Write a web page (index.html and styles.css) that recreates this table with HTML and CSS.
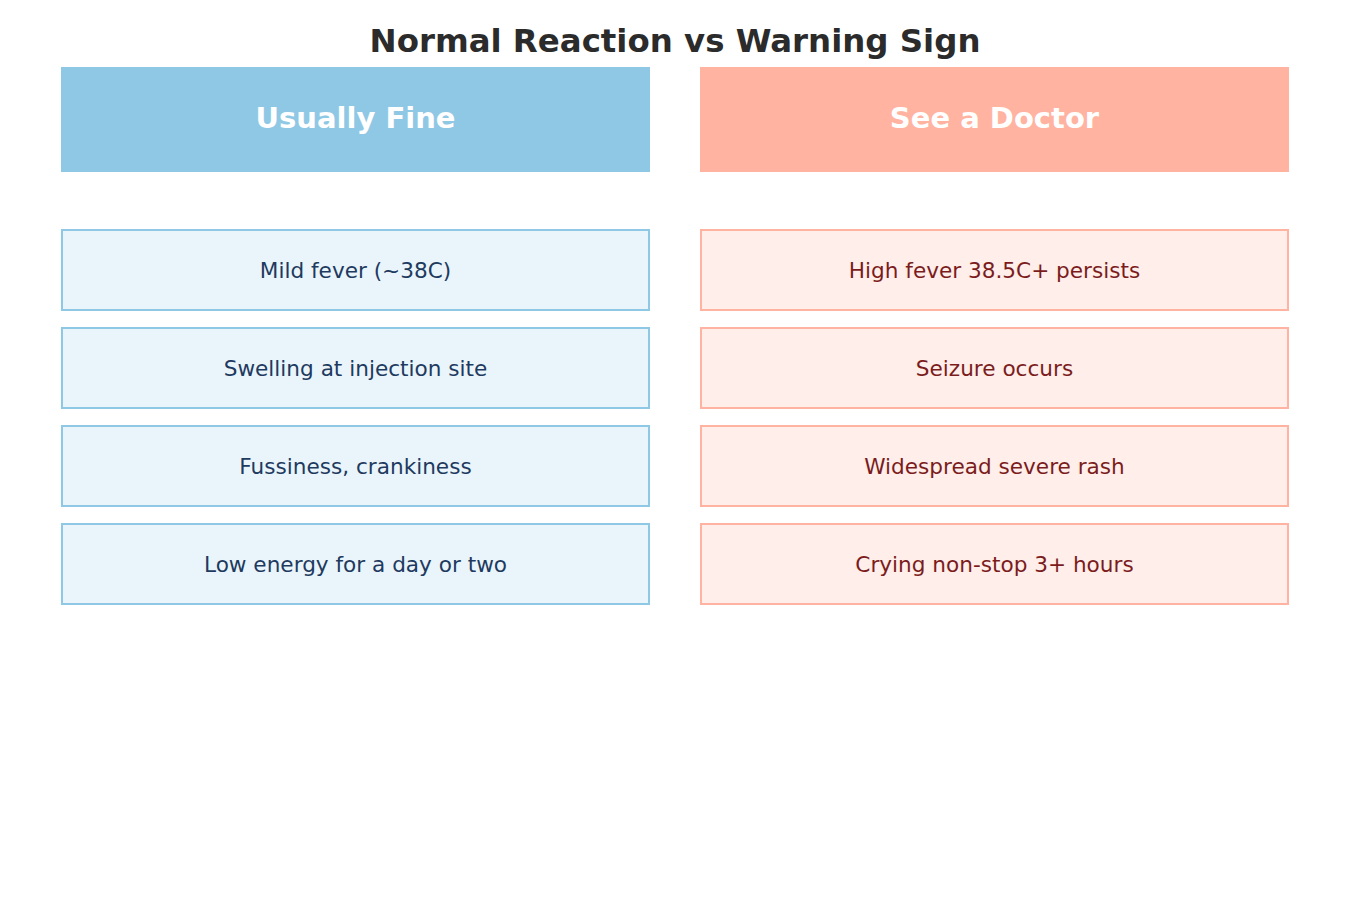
FILE: index.html
```html
<!DOCTYPE html>
<html>
<head>
<meta charset="utf-8">
<link rel="stylesheet" href="styles.css">
</head>
<body>
<div class="page">
  <h1 class="title">Normal Reaction vs Warning Sign</h1>
  <div class="columns">
    <div class="col col-fine">
      <div class="head">Usually Fine</div>
      <div class="items">
        <div class="item">Mild fever (~38C)</div>
        <div class="item">Swelling at injection site</div>
        <div class="item">Fussiness, crankiness</div>
        <div class="item">Low energy for a day or two</div>
      </div>
    </div>
    <div class="col col-doctor">
      <div class="head">See a Doctor</div>
      <div class="items">
        <div class="item">High fever 38.5C+ persists</div>
        <div class="item">Seizure occurs</div>
        <div class="item">Widespread severe rash</div>
        <div class="item">Crying non-stop 3+ hours</div>
      </div>
    </div>
  </div>
</div>
</body>
</html>
```
FILE: styles.css
```css
html, body {
  margin: 0;
  padding: 0;
  background: #ffffff;
}
body {
  font-family: "DejaVu Sans", sans-serif;
}
.page {
  width: 1350px;
  height: 900px;
  box-sizing: border-box;
  padding-top: 21px;
}
.title {
  margin: 0;
  text-align: center;
  font-size: 32.4px;
  font-weight: bold;
  color: #2b2b2b;
  line-height: 40px;
  height: 46px;
}
.columns {
  display: flex;
  gap: 50px;
  padding-left: 61px;
}
.col {
  width: 589px;
  display: flex;
  flex-direction: column;
}
.head {
  height: 105px;
  box-sizing: border-box;
  padding-bottom: 4px;
  display: flex;
  align-items: center;
  justify-content: center;
  color: #ffffff;
  font-weight: bold;
  font-size: 29px;
}
.items {
  margin-top: 57px;
  display: flex;
  flex-direction: column;
  gap: 16px;
}
.item {
  height: 82px;
  box-sizing: border-box;
  display: flex;
  align-items: center;
  justify-content: center;
  font-size: 21.6px;
  border: 2px solid;
}
.col-fine .head { background: #8fc8e4; }
.col-fine .item {
  background: #eaf5fb;
  border-color: #8fc8e4;
  color: #1e3a5f;
}
.col-doctor .head { background: #ffb3a0; }
.col-doctor .item {
  background: #ffeeea;
  border-color: #ffb3a0;
  color: #7b1c1c;
}
```
